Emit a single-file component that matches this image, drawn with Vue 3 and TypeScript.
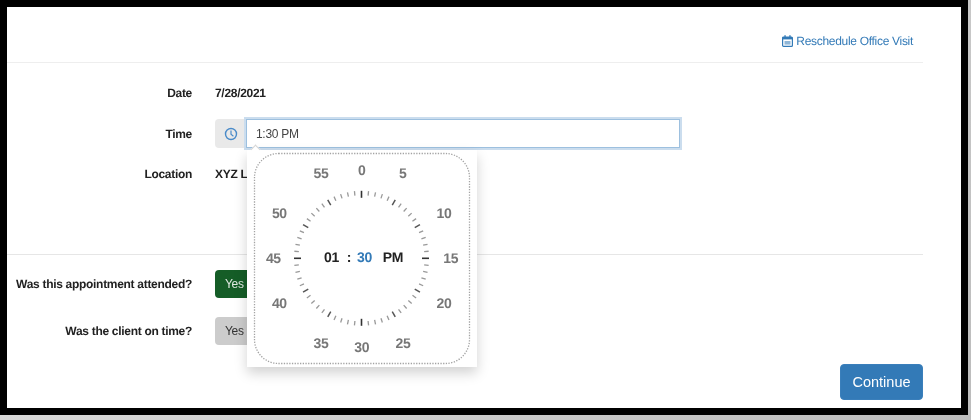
<template>
  <div class="page">
    <div class="screen">
      <div class="top-bar">
        <a class="reschedule-link">
          <svg class="cal-icon" width="11" height="12" viewBox="0 0 11 12">
            <rect x="0.6" y="2" width="9.8" height="9.4" rx="1" fill="none" stroke="#337ab7" stroke-width="1.2" />
            <rect x="0.6" y="2" width="9.8" height="2.4" fill="#337ab7" />
            <rect x="2.4" y="0.2" width="1.3" height="2.6" fill="#337ab7" />
            <rect x="7.3" y="0.2" width="1.3" height="2.6" fill="#337ab7" />
            <rect x="2.5" y="6" width="6" height="3.6" fill="#337ab7" opacity="0.55" />
          </svg>
          Reschedule Office Visit
        </a>
      </div>

      <div class="details">
        <div class="form-row date-row">
          <label>Date</label>
          <span class="value">7/28/2021</span>
        </div>
        <div class="form-row time-row">
          <label>Time</label>
          <div class="input-group">
            <span class="addon">
              <svg width="14" height="14" viewBox="0 0 14 14">
                <circle cx="7" cy="7" r="5.5" fill="none" stroke="#4a8bc9" stroke-width="1.4" />
                <path d="M7 3.4V7.3L9.4 9.2" fill="none" stroke="#4a8bc9" stroke-width="1.2" />
              </svg>
            </span>
            <input class="time-input" type="text" value="1:30 PM" />
          </div>
        </div>
        <div class="form-row location-row">
          <label>Location</label>
          <span class="value">XYZ Location</span>
        </div>
      </div>

      <div class="questions">
        <div class="form-row question-row">
          <label>Was this appointment attended?</label>
          <button class="btn btn-yes-active">Yes</button>
        </div>
        <div class="form-row question-row">
          <label>Was the client on time?</label>
          <button class="btn btn-yes">Yes</button>
        </div>
      </div>

      <div class="footer">
        <button class="btn-continue">Continue</button>
      </div>

      <!-- time picker popover, sits over the form -->
      <div class="popover">
        <svg class="dial" width="230" height="217" viewBox="0 0 230 217">
          <rect x="7.5" y="3.5" width="215" height="210" rx="24" fill="none" stroke="#a3a3a3" stroke-width="1.3" stroke-dasharray="1.3 1.4" />
          <line
            v-for="t in ticks"
            :key="t.i"
            :x1="t.x1"
            :y1="t.y1"
            :x2="t.x2"
            :y2="t.y2"
            :stroke="t.color"
            :stroke-width="t.width"
          />
          <text
            v-for="n in numbers"
            :key="n.label"
            class="dial-number"
            :x="n.x"
            :y="n.y"
            text-anchor="middle"
            dominant-baseline="central"
          >{{ n.label }}</text>
        </svg>
        <div class="readout">
          <span>01</span>
          <span class="colon">:</span>
          <span class="minutes">30</span>
          <span class="ampm">PM</span>
        </div>
      </div>
    </div>
  </div>
</template>

<script setup lang="ts">
// clock centre inside the popover
const cx = 114.5;
const cy = 108.3;
const outerRadius = 67.5;

const ticks = Array.from({ length: 60 }, (_, i) => {
  const angle = (i * 6 * Math.PI) / 180;
  const isQuarter = i % 15 === 0;
  const isFive = i % 5 === 0;
  const len = isQuarter ? 7 : isFive ? 6 : 4.5;
  const sin = Math.sin(angle);
  const cos = Math.cos(angle);
  return {
    i,
    x1: cx + sin * outerRadius,
    y1: cy - cos * outerRadius,
    x2: cx + sin * (outerRadius - len),
    y2: cy - cos * (outerRadius - len),
    color: isQuarter ? '#333' : isFive ? '#555' : '#999',
    width: isQuarter ? 1.6 : isFive ? 1.5 : 1.3,
  };
});

// the labels don't sit on a true circle in the widget
const numbers = [
  { label: '0', x: 114.7, y: 20 },
  { label: '5', x: 155.7, y: 23.3 },
  { label: '10', x: 197, y: 63 },
  { label: '15', x: 203.7, y: 108 },
  { label: '20', x: 197, y: 153 },
  { label: '25', x: 156, y: 192.7 },
  { label: '30', x: 114.7, y: 196.7 },
  { label: '35', x: 74, y: 192.7 },
  { label: '40', x: 32.3, y: 153 },
  { label: '45', x: 26.3, y: 108 },
  { label: '50', x: 32.3, y: 63 },
  { label: '55', x: 74, y: 23.3 },
];
</script>

<style>
html,
body {
  margin: 0;
  overflow: hidden;
}
</style>

<style scoped>
.page {
  width: 971px;
  height: 420px;
  background: linear-gradient(135deg, #e4e4e4, #bcbcbc);
  font-family: "Liberation Sans", Arial, sans-serif;
  font-size: 12px;
  letter-spacing: -0.3px;
  color: #333;
  text-rendering: geometricPrecision;
}

.screen {
  position: relative;
  box-sizing: border-box;
  width: 968px;
  height: 415px;
  border: 7px solid #000;
  background: #fff;
  padding-right: 38px;
  display: flex;
  flex-direction: column;
  filter: blur(0.35px);
}

.top-bar {
  height: 56px;
  flex-shrink: 0;
  box-sizing: border-box;
  display: flex;
  justify-content: flex-end;
  align-items: flex-start;
  padding: 27px 10px 0 0;
  border-bottom: 1px solid #eee;
}

.reschedule-link {
  color: #337ab7;
  font-size: 12px;
  line-height: 14px;
  display: flex;
  align-items: center;
  gap: 3px;
}

.details {
  height: 192px;
  flex-shrink: 0;
  box-sizing: border-box;
  border-bottom: 1px solid #e6e6e6;
}

.form-row {
  display: grid;
  grid-template-columns: 185px 1fr;
  column-gap: 23px;
  align-items: center;
}

.form-row label {
  text-align: right;
  font-weight: 700;
  color: #222;
}

.value {
  font-weight: 700;
  color: #222;
}

.date-row {
  margin-top: 22px;
  height: 15px;
}

.time-row {
  margin-top: 19px;
}

.location-row {
  margin-top: 18px;
  height: 15px;
}

.input-group {
  display: flex;
  width: 465px;
  height: 29px;
}

.addon {
  width: 31px;
  box-sizing: border-box;
  background: #e9e9e9;
  border-radius: 4px 0 0 4px;
  display: flex;
  align-items: center;
  justify-content: center;
}

.time-input {
  flex: 1;
  min-width: 0;
  box-sizing: border-box;
  border: 1px solid #9dc0df;
  box-shadow: 0 0 0 2px #cbddee;
  outline: none;
  padding: 0 9px;
  font: inherit;
  letter-spacing: inherit;
  color: #444;
  background: #fff;
}

.questions {
  padding-top: 15px;
}

.question-row {
  margin-bottom: 19px;
}

.btn {
  width: 44px;
  height: 28px;
  border: none;
  border-radius: 4px;
  font: inherit;
  letter-spacing: inherit;
  text-align: left;
  padding-left: 10px;
}

.btn-yes-active {
  background: #155d27;
  color: #dfe9e1;
}

.btn-yes {
  background: #ccc;
  color: #333;
}

.footer {
  display: flex;
  justify-content: flex-end;
  margin-top: auto;
  padding-bottom: 9px;
}

.btn-continue {
  width: 83px;
  height: 36px;
  border: 1px solid #3a7fbb;
  border-radius: 4px;
  background: #337ab7;
  color: #fff;
  font: inherit;
  font-size: 14.5px;
  letter-spacing: 0;
}

.popover {
  position: absolute;
  left: 240px;
  top: 143px;
  width: 230px;
  height: 217px;
  background: #fff;
  box-shadow: 0 6px 12px rgba(0, 0, 0, 0.18);
}

.popover::before {
  content: "";
  position: absolute;
  left: 5px;
  top: -4px;
  width: 7px;
  height: 7px;
  background: #fff;
  transform: rotate(45deg);
  border-left: 1px solid #d5d5d5;
  border-top: 1px solid #d5d5d5;
  box-sizing: border-box;
}

.dial {
  display: block;
}

.dial-number {
  font-size: 14px;
  font-weight: 700;
  letter-spacing: -0.4px;
  fill: #777;
}

.readout {
  position: absolute;
  left: 77px;
  top: 100px;
  display: flex;
  font-size: 14px;
  line-height: 15px;
  font-weight: 700;
  letter-spacing: -0.4px;
  color: #222;
}

.colon {
  margin-left: 8px;
}

.minutes {
  margin-left: 6px;
  color: #337ab7;
}

.ampm {
  margin-left: 11px;
}
</style>
